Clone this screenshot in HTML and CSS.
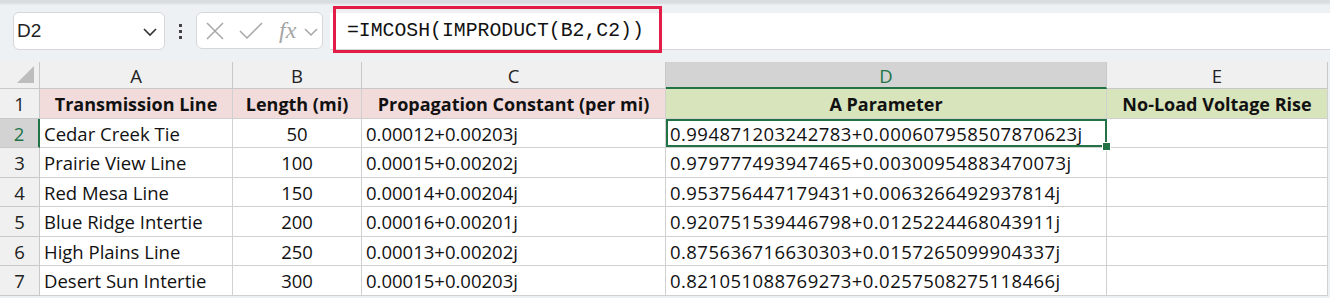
FILE: index.html
```html
<!DOCTYPE html>
<html lang="en">
<head>
    <meta charset="UTF-8">
    <title>IMCOSH - A Parameter</title>
    <link rel="stylesheet" href="styles.css">
</head>
<body>
    <div class="ribbon-edge"></div>

    <div class="formula-row">
        <div class="name-box">
            <span>D2</span>
            <svg class="chev" width="16" height="10" viewBox="0 0 16 10"><path d="M2 2 L8 8 L14 2" fill="none" stroke="#333" stroke-width="1.6"/></svg>
        </div>
        <div class="dots">
            <span></span><span></span><span></span>
        </div>
        <div class="fx-box">
            <svg width="20" height="20" viewBox="0 0 20 20"><path d="M2 2 L18 18 M18 2 L2 18" stroke="#a6a6a6" stroke-width="1.5" fill="none"/></svg>
            <svg width="26" height="20" viewBox="0 0 26 20"><path d="M2 10 L9 17 L24 2" stroke="#a6a6a6" stroke-width="1.5" fill="none"/></svg>
            <span class="fx">fx</span>
            <svg class="fx-chev" width="14" height="10" viewBox="0 0 14 10"><path d="M1 2 L7 8 L13 2" fill="none" stroke="#a6a6a6" stroke-width="1.5"/></svg>
        </div>
        <div class="formula-input">
            <span class="formula">=IMCOSH(IMPRODUCT(B2,C2))</span>
            <div class="highlight"></div>
        </div>
    </div>

    <div class="sheet">
        <div class="corner"><div class="tri"></div></div>
        <div class="col-head">A</div>
        <div class="col-head">B</div>
        <div class="col-head">C</div>
        <div class="col-head active">D</div>
        <div class="col-head">E</div>

        <div class="row-head">1</div>
        <div class="cell th pink">Transmission Line</div>
        <div class="cell th pink">Length (mi)</div>
        <div class="cell th pink">Propagation Constant (per mi)</div>
        <div class="cell th green">A Parameter</div>
        <div class="cell th green">No-Load Voltage Rise</div>

        <div class="row-head active">2</div>
        <div class="cell">Cedar Creek Tie</div>
        <div class="cell num">50</div>
        <div class="cell">0.00012+0.00203j</div>
        <div class="cell cplx selected">0.994871203242783+0.000607958507870623j<i class="handle"></i></div>
        <div class="cell"></div>

        <div class="row-head">3</div>
        <div class="cell">Prairie View Line</div>
        <div class="cell num">100</div>
        <div class="cell">0.00015+0.00202j</div>
        <div class="cell cplx">0.979777493947465+0.00300954883470073j</div>
        <div class="cell"></div>

        <div class="row-head">4</div>
        <div class="cell">Red Mesa Line</div>
        <div class="cell num">150</div>
        <div class="cell">0.00014+0.00204j</div>
        <div class="cell cplx">0.953756447179431+0.0063266492937814j</div>
        <div class="cell"></div>

        <div class="row-head">5</div>
        <div class="cell">Blue Ridge Intertie</div>
        <div class="cell num">200</div>
        <div class="cell">0.00016+0.00201j</div>
        <div class="cell cplx">0.920751539446798+0.0125224468043911j</div>
        <div class="cell"></div>

        <div class="row-head">6</div>
        <div class="cell">High Plains Line</div>
        <div class="cell num">250</div>
        <div class="cell">0.00013+0.00202j</div>
        <div class="cell cplx">0.875636716630303+0.0157265099904337j</div>
        <div class="cell"></div>

        <div class="row-head">7</div>
        <div class="cell">Desert Sun Intertie</div>
        <div class="cell num">300</div>
        <div class="cell">0.00015+0.00203j</div>
        <div class="cell cplx">0.821051088769273+0.0257508275118466j</div>
        <div class="cell"></div>
    </div>
</body>
</html>
```

FILE: styles.css
```css
body {
    margin: 0;
    width: 1330px;
    height: 298px;
    overflow: hidden;
    background: #eef1f4;
    font-family: "Open Sans", sans-serif;
    color: #111;
}
.ribbon-edge {
    height: 3px;
    background: #d9dce0;
    box-shadow: 0 1px 2px rgba(0,0,0,0.08);
}
.formula-row {
    display: flex;
    align-items: flex-start;
    height: 59px;
    padding-top: 9px;
    box-sizing: border-box;
}
.name-box {
    margin-left: 13px;
    width: 152px;
    height: 38px;
    box-sizing: border-box;
    background: #fff;
    border: 1px solid #d5d7da;
    border-radius: 6px;
    display: flex;
    align-items: center;
    justify-content: space-between;
    padding: 0 6px 0 3px;
    font-family: "Liberation Sans", sans-serif;
    font-size: 19px;
    color: #222;
}
.name-box .chev { margin-top: 2px; }
.dots {
    width: 31px;
    height: 38px;
    display: flex;
    flex-direction: column;
    align-items: center;
    justify-content: center;
    gap: 3px;
}
.dots span {
    width: 3px;
    height: 3px;
    background: #444;
}
.fx-box {
    width: 127px;
    height: 37px;
    box-sizing: border-box;
    background: #fff;
    border: 1px solid #d5d7da;
    border-radius: 6px;
    display: flex;
    align-items: center;
    gap: 13px;
    padding-left: 8px;
}
.fx-box .fx {
    font-family: "Liberation Serif", serif;
    font-style: italic;
    font-size: 24px;
    color: #a6a6a6;
    margin-left: 2px;
    margin-right: -5px;
}
.fx-chev { margin-top: 2px; }
.formula-input {
    position: relative;
    flex: 1;
    margin-left: 7px;
    height: 37px;
    margin-top: 1px;
    background: #fff;
    border-bottom: 1px solid #d5d7da;
    box-sizing: border-box;
    display: flex;
    align-items: center;
}
.formula {
    font-family: "Liberation Mono", monospace;
    font-size: 19.8px;
    margin-left: 17px;
    color: #111;
}
.highlight {
    position: absolute;
    left: 3px;
    top: -7px;
    width: 329px;
    height: 47px;
    box-sizing: border-box;
    border: 3px solid #e11d48;
}
.sheet {
    display: grid;
    grid-template-columns: 40px 193px 129px 304px 441px 221px;
    grid-template-rows: 27px 30px 29px 30px 29px 30px 29px 30px;
    font-size: 18.5px;
}
.corner, .col-head, .row-head {
    background: #f0f0f0;
    border-right: 1px solid #c8c8c8;
    border-bottom: 1px solid #c8c8c8;
    box-sizing: border-box;
    display: flex;
    align-items: center;
    justify-content: center;
    color: #222;
}
.corner {
    position: relative;
}
.tri {
    position: absolute;
    right: 5px;
    bottom: 5px;
    width: 0;
    height: 0;
    border-left: 17px solid transparent;
    border-bottom: 17px solid #bdbdbd;
}
.col-head { font-size: 18.5px; padding-top: 1px; }
.col-head.active {
    background: #d3d3d3;
    color: #217346;
    border-bottom: 2px solid #217346;
}
.row-head { font-size: 18.5px; }
.row-head.active {
    background: #d3d3d3;
    color: #217346;
    border-right: 2px solid #217346;
}
.cell {
    background: #fff;
    border-right: 1px solid #d0d0d0;
    border-bottom: 1px solid #d0d0d0;
    box-sizing: border-box;
    display: flex;
    align-items: center;
    padding-left: 4px;
    white-space: nowrap;
    overflow: visible;
}
.cell.num { justify-content: center; padding-left: 0; }
.cell.cplx { letter-spacing: 0.45px; }
.cell.th {
    font-weight: bold;
    justify-content: center;
    padding-left: 0;
    font-size: 18px;
}
.pink { background: #f2dcdb; }
.green { background: #d8e4bc; }
.cell.selected {
    position: relative;
    box-shadow: inset 0 0 0 2px #217346;
    border-right: none;
}
.handle {
    position: absolute;
    right: -4px;
    bottom: -4px;
    width: 7px;
    height: 7px;
    background: #217346;
    border: 1px solid #fff;
}
```
